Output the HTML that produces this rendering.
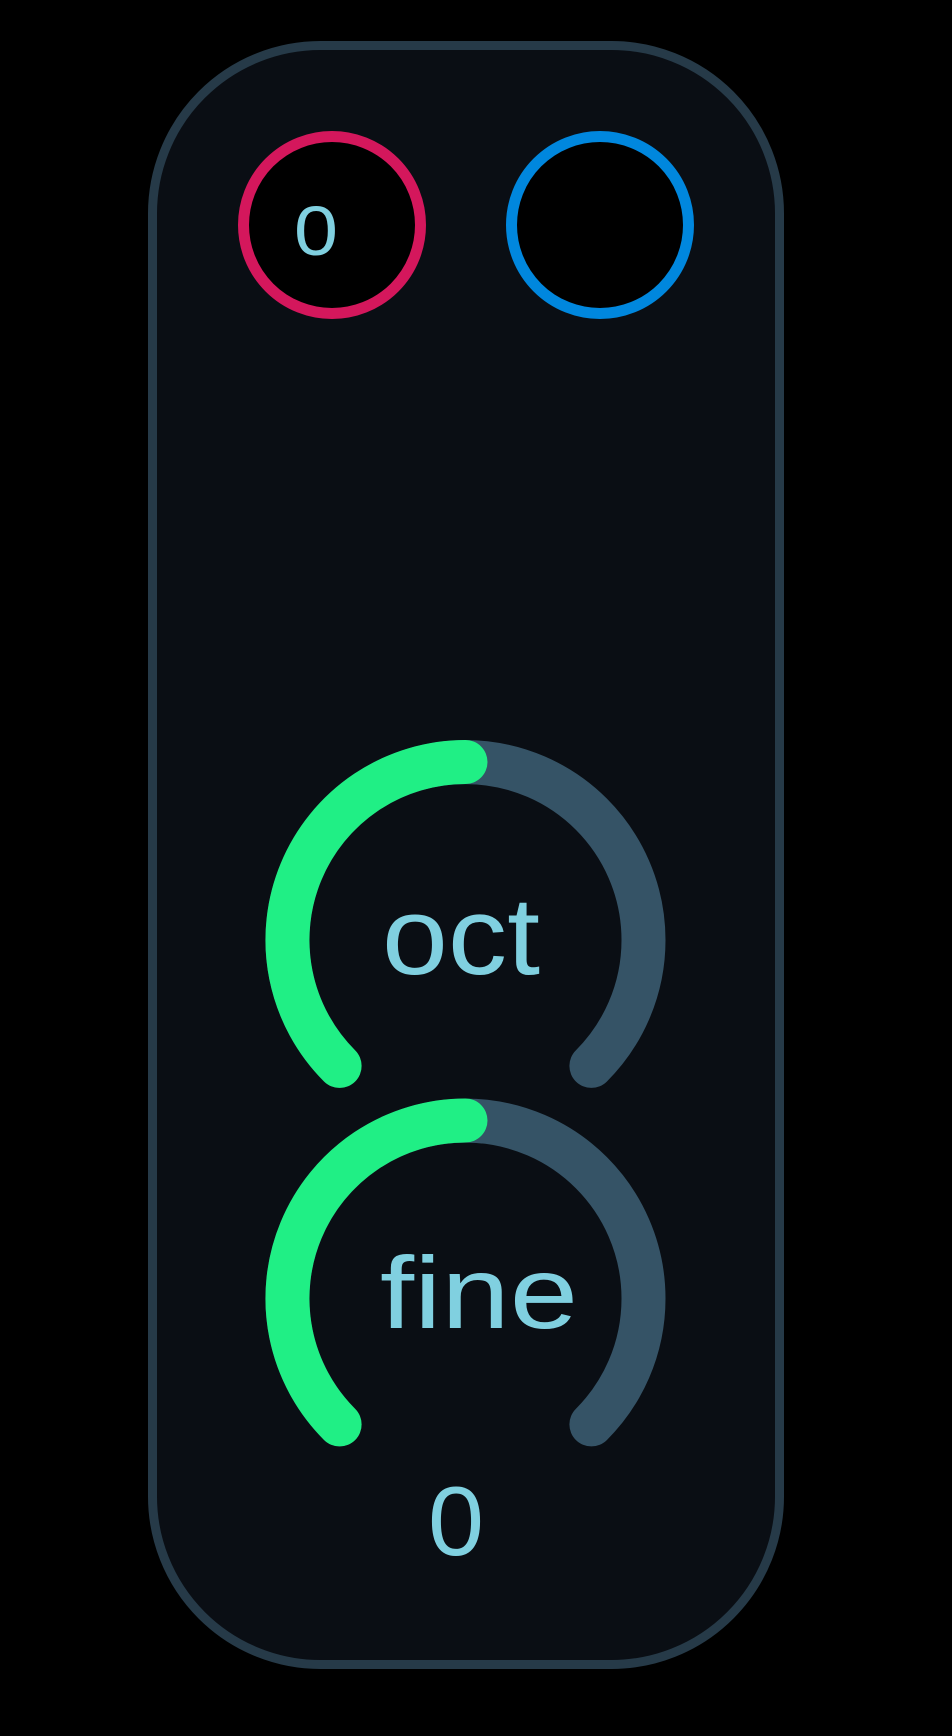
<!DOCTYPE html>
<html><head><meta charset="utf-8"><style>
html,body{margin:0;padding:0;background:#000;width:952px;height:1736px;overflow:hidden}
svg{display:block}
text{font-family:"Liberation Sans",sans-serif;fill:#80d0e0}
</style></head><body>
<svg width="952" height="1736" viewBox="0 0 952 1736">
<rect x="152.5" y="45.5" width="627" height="1619" rx="168" fill="#0a0e14" stroke="#263a48" stroke-width="9"/>
<circle cx="332" cy="225" r="88.5" fill="#000" stroke="#d4175c" stroke-width="11"/>
<circle cx="600" cy="225" r="88.5" fill="#000" stroke="#0087de" stroke-width="11"/>
<text x="294" y="255" font-size="70" textLength="44" lengthAdjust="spacingAndGlyphs">0</text>
<g fill="none" stroke-width="44" stroke-linecap="round">
<path d="M339.6 1065.9 A178 178 0 1 1 591.4 1065.9" stroke="#355366"/>
<path d="M339.6 1065.9 A178 178 0 0 1 465.5 762" stroke="#20ef85"/>
<path d="M339.6 1424.4 A178 178 0 1 1 591.4 1424.4" stroke="#355366"/>
<path d="M339.6 1424.4 A178 178 0 0 1 465.5 1120.5" stroke="#20ef85"/>
</g>
<text x="382" y="974" font-size="110" textLength="158" lengthAdjust="spacingAndGlyphs">oct</text>
<text x="380" y="1328" font-size="102" textLength="198" lengthAdjust="spacingAndGlyphs">fine</text>
<text x="428" y="1555" font-size="98" textLength="56" lengthAdjust="spacingAndGlyphs">0</text>
</svg>
</body></html>
